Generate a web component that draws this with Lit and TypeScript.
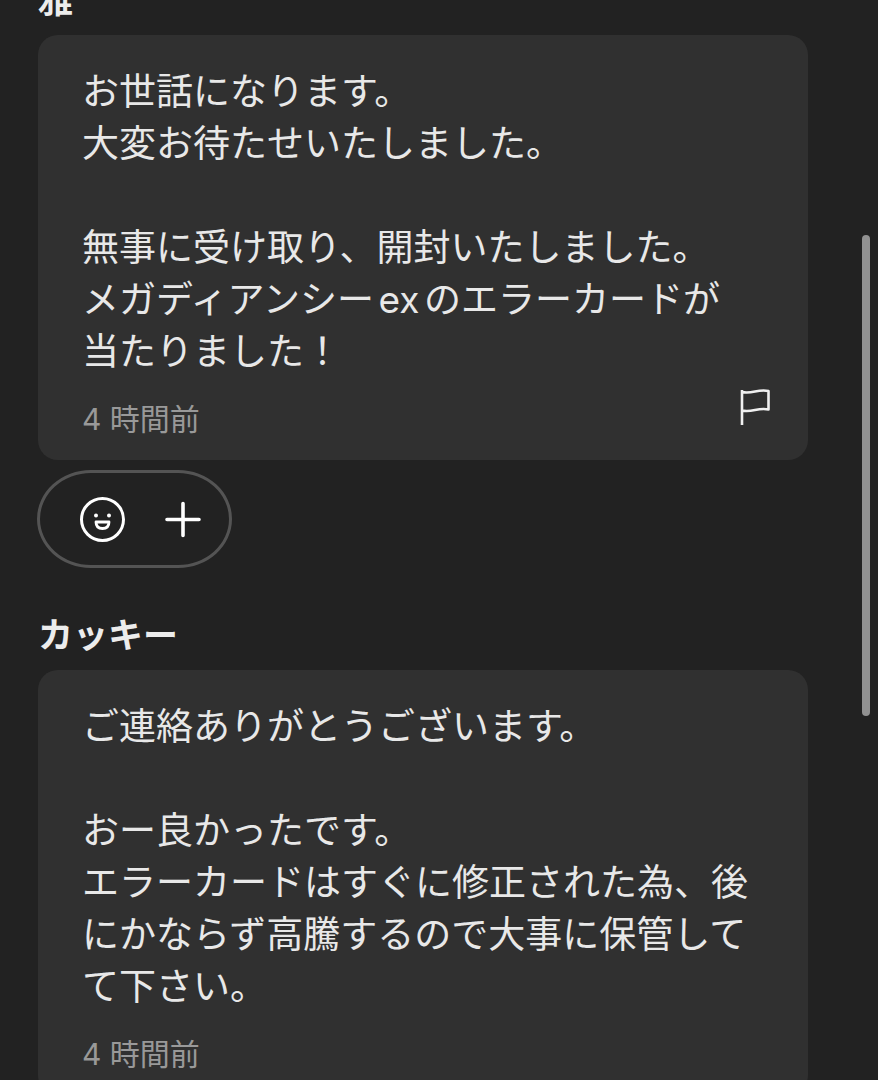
import { LitElement, html, css, nothing } from "lit";
import { customElement, property } from "lit/decorators.js";

interface Message {
  author: string;
  body: string;
  time: string;
  reportable: boolean;
}

const messages: Message[] = [
  {
    author: "雅",
    body: "お世話になります。\n大変お待たせいたしました。\n\n無事に受け取り、開封いたしました。\nメガディアンシーexのエラーカードが当たりました！",
    time: "4 時間前",
    reportable: true,
  },
  {
    author: "カッキー",
    body: "ご連絡ありがとうございます。\n\nおー良かったです。\nエラーカードはすぐに修正された為、後にかならず高騰するので大事に保管してて下さい。",
    time: "4 時間前",
    reportable: false,
  },
];

@customElement("chat-message")
export class ChatMessage extends LitElement {
  @property({ attribute: false }) message!: Message;

  static styles = css`
    :host {
      display: block;
    }
    .author {
      margin: 0 0 10px;
      font-size: 35px;
      line-height: 50px;
      font-weight: 700;
      color: #ececec;
    }
    .card {
      padding: 31px 38px 21px 44px;
      border-radius: 20px;
      background: #303030;
    }
    .body {
      margin: 0;
      padding-right: 18px;
      font-size: 37px;
      line-height: 52px;
      color: #e8e8e8;
      white-space: pre-line;
      line-break: anywhere;
      text-autospace: normal;
    }
    .footer {
      display: flex;
      justify-content: space-between;
      align-items: flex-end;
      height: 52px;
      margin-top: 9px;
    }
    .time {
      font-size: 30px;
      line-height: 40px;
      color: #999;
    }
    .report {
      align-self: flex-start;
      display: block;
      padding: 0;
      border: 0;
      background: none;
      color: #f0f0f0;
      cursor: pointer;
    }
    .report svg {
      display: block;
    }
    .reactions {
      display: flex;
      align-items: center;
      justify-content: space-between;
      box-sizing: border-box;
      width: 195px;
      height: 98px;
      margin: 10px 0 0 -1px;
      padding: 0 22px 0 38px;
      border: 3px solid #545454;
      border-radius: 54px / 49px;
    }
    .reaction {
      padding: 0;
      border: 0;
      background: none;
      color: #fff;
      cursor: pointer;
    }
    .reaction svg {
      display: block;
    }
  `;

  render() {
    const { author, body, time, reportable } = this.message;
    return html`
      <h2 class="author">${author}</h2>
      <div class="card">
        <p class="body">${body}</p>
        <div class="footer">
          <time class="time">${time}</time>
          ${reportable
            ? html`<button class="report" aria-label="報告">
                <svg width="30" height="38" viewBox="0 0 30 38" fill="none" stroke="currentColor" stroke-width="2.6" stroke-linejoin="round">
                  <path d="M2 3V38M2 5C12 7.500 18 1.500 28.500 4V22.500C18 20 12 26 2 23.500" />
                </svg>
              </button>`
            : nothing}
        </div>
      </div>
      ${reportable
        ? html`<div class="reactions">
            <button class="reaction" aria-label="リアクション">
              <svg width="48" height="48" viewBox="0 0 48 48" fill="none" stroke="currentColor">
                <circle cx="24.500" cy="24.500" r="21" stroke-width="3" />
                <circle cx="18" cy="20.500" r="2" fill="currentColor" stroke="none" />
                <circle cx="31" cy="20.500" r="2" fill="currentColor" stroke="none" />
                <path d="M18 27H31C31 31.500 28.500 33.500 24.500 33.500S18 31.500 18 27Z" stroke-width="2.800" stroke-linejoin="round" />
              </svg>
            </button>
            <button class="reaction" aria-label="追加">
              <svg width="48" height="48" viewBox="0 0 48 48" stroke="currentColor" stroke-width="3.600" stroke-linecap="round">
                <path d="M24 8.500V40.500M8 24.500H40" />
              </svg>
            </button>
          </div>`
        : nothing}
    `;
  }
}

@customElement("app-root")
export class AppRoot extends LitElement {
  static styles = css`
    :host {
      display: block;
      height: 100vh;
      overflow: hidden;
      background: #222;
      font-family: Inter, "Noto Sans CJK JP", sans-serif;
    }
    .thread {
      display: flex;
      flex-direction: column;
      gap: 42px;
      margin-top: -25px;
      padding: 0 70px 0 38px;
    }
    .scroll-thumb {
      position: fixed;
      top: 21.8%;
      right: 8px;
      width: 8px;
      height: 44.500%;
      border-radius: 4px;
      background: #919191;
    }
  `;

  render() {
    return html`
      <main class="thread" lang="ja">
        ${messages.map((m) => html`<chat-message .message=${m}></chat-message>`)}
      </main>
      <div class="scroll-thumb"></div>
    `;
  }
}
